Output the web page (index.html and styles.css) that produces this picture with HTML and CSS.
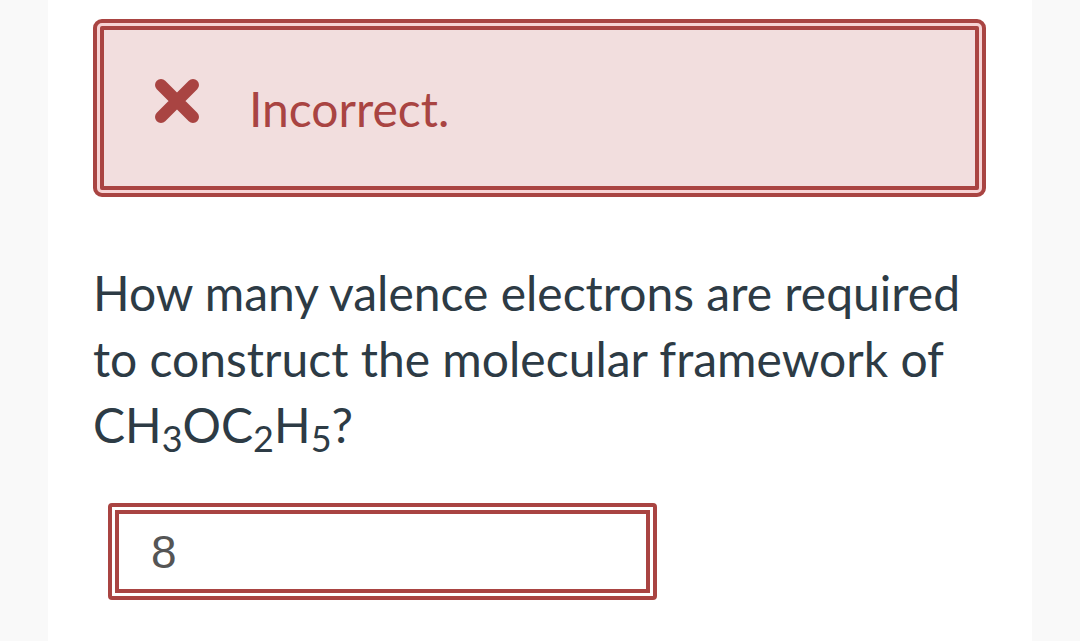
FILE: index.html
```html
<!DOCTYPE html>
<html lang="en">
<head>
<meta charset="utf-8">
<title>Quiz question</title>
<link rel="stylesheet" href="styles.css">
</head>
<body>
<div class="page">
  <div class="alert">
    <div class="alert-inner">
      <svg class="alert-icon" width="44" height="44" viewBox="0 0 44 44" aria-hidden="true">
        <path d="M6 6 L38 38 M38 6 L6 38" stroke="#a94442" stroke-width="12" stroke-linecap="round" fill="none"/>
      </svg>
      <span class="alert-text">Incorrect.</span>
    </div>
  </div>
  <p class="question">How many valence electrons are required to construct the molecular framework of CH<sub>3</sub>OC<sub>2</sub>H<sub>5</sub>?</p>
  <div class="answer">
    <div class="answer-inner">8</div>
  </div>
</div>
</body>
</html>
```
FILE: styles.css
```css
html, body {
  margin: 0;
  padding: 0;
  background: #f9f9f9;
}
.page {
  margin-left: 48px;
  width: 984px;
  height: 641px;
  background: #ffffff;
  box-sizing: border-box;
  padding: 19px 46px 0 45px;
  overflow: hidden;
}
.alert {
  border: 4px solid #a94442;
  border-radius: 9px;
  padding: 3px;
  background: #f7d3d4;
}
.alert-inner {
  border: 4px solid #a94442;
  border-radius: 2px;
  background: #f2dede;
  height: 164px;
  box-sizing: border-box;
  display: flex;
  align-items: center;
  padding-left: 51px;
}
.alert-icon {
  display: block;
  flex: none;
  margin-top: -15px;
}
.alert-text {
  font-family: Lato, "Noto Sans", sans-serif;
  font-size: 48px;
  color: #a94442;
  margin-left: 50px;
}
.question {
  font-family: Lato, "Noto Sans", sans-serif;
  font-size: 48px;
  line-height: 66px;
  color: #2d3b45;
  margin: 63px 0 0 0;
}
.question sub {
  font-size: 0.75em;
  line-height: 0;
  vertical-align: -0.25em;
}
.answer {
  margin: 45px 0 0 15px;
  width: 549px;
  height: 97px;
  box-sizing: border-box;
  border: 4px solid #a94442;
  border-radius: 4px;
  padding: 3px;
  background: #ffffff;
}
.answer-inner {
  height: 100%;
  box-sizing: border-box;
  border: 4px solid #a94442;
  display: flex;
  align-items: center;
  padding-left: 32px;
  font-family: "Liberation Sans", Arial, sans-serif;
  font-size: 46px;
  color: #555555;
}
```
